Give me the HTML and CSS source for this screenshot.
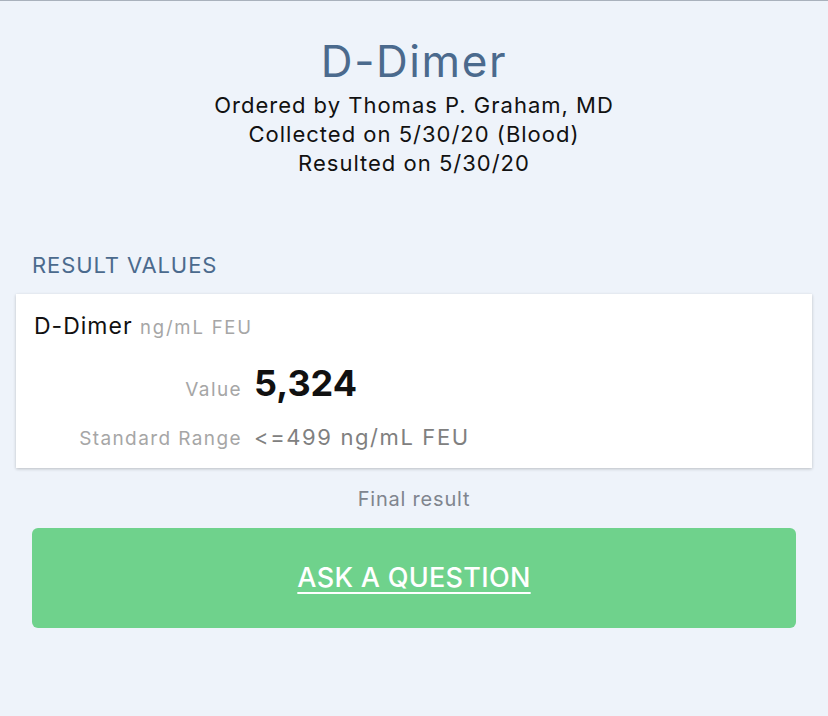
FILE: index.html
```html
<!DOCTYPE html>
<html lang="en">
<head>
    <meta charset="UTF-8">
    <meta name="viewport" content="width=device-width, initial-scale=1.0">
    <title>D-Dimer</title>
    <link rel="stylesheet" href="styles.css">
</head>
<body>
    <header class="test-header">
        <h1>D-Dimer</h1>
        <p>Ordered by Thomas P. Graham, MD</p>
        <p>Collected on 5/30/20 (Blood)</p>
        <p>Resulted on 5/30/20</p>
    </header>
    <main>
        <h2 class="section-title">RESULT VALUES</h2>
        <div class="result-card">
            <div class="component">D-Dimer <span class="units">ng/mL FEU</span></div>
            <div class="result-row value-row">
                <span class="label">Value</span>
                <span class="value">5,324</span>
            </div>
            <div class="result-row range-row">
                <span class="label">Standard Range</span>
                <span class="range">&lt;=499 ng/mL FEU</span>
            </div>
        </div>
        <p class="status">Final result</p>
        <a class="ask-btn" href="#">ASK A QUESTION</a>
    </main>
</body>
</html>
```

FILE: styles.css
```css
body {
    font-family: Inter, "Noto Sans", sans-serif;
    background-color: #eef3fa;
    margin: 0;
    padding: 0;
    border-top: 1px solid #a9b1bc;
    color: #111;
    height: 715px;
}
.test-header {
    text-align: center;
    padding-top: 33px;
}
h1 {
    margin: 0 0 2.5px;
    font-size: 44px;
    font-weight: 400;
    letter-spacing: 1.6px;
    color: #4b6a8d;
    line-height: 54px;
}
.test-header p {
    margin: 0;
    font-size: 22px;
    letter-spacing: 1px;
    line-height: 29px;
}
main {
    padding: 0 16px;
}
.section-title {
    margin: 73px 0 0 16px;
    font-size: 22px;
    font-weight: 400;
    letter-spacing: 0.9px;
    color: #4b6a8d;
    line-height: 28px;
}
.result-card {
    background-color: white;
    margin-top: 15px;
    padding: 17px 18px 16px;
    box-shadow: 0 1px 3px rgba(0, 0, 0, 0.22);
}
.component {
    font-size: 23px;
    letter-spacing: 1px;
    line-height: 30px;
}
.units {
    font-size: 18.5px;
    letter-spacing: 1.8px;
    color: #a6a6a6;
}
.result-row {
    display: grid;
    grid-template-columns: 208px 1fr;
    column-gap: 12px;
    align-items: baseline;
}
.value-row {
    margin-top: 16px;
}
.range-row {
    margin-top: 14px;
}
.label {
    text-align: right;
    font-size: 19px;
    letter-spacing: 1.4px;
    color: #a6a6a6;
}
.value {
    font-size: 36px;
    font-weight: 700;
    line-height: 50px;
}
.range {
    font-size: 22px;
    letter-spacing: 1.6px;
    color: #808080;
    line-height: 30px;
}
.status {
    text-align: center;
    margin: 18px 0 0;
    font-size: 20px;
    letter-spacing: 0.8px;
    color: #80858e;
    line-height: 26px;
}
.ask-btn {
    display: flex;
    align-items: center;
    justify-content: center;
    height: 100px;
    margin: 16px 16px 0;
    background-color: #6fd28c;
    border-radius: 6px;
    color: white;
    font-size: 27px;
    font-weight: 500;
    letter-spacing: 0.3px;
    text-decoration: underline;
    text-underline-offset: 5px;
    text-decoration-thickness: 2px;
}
```
